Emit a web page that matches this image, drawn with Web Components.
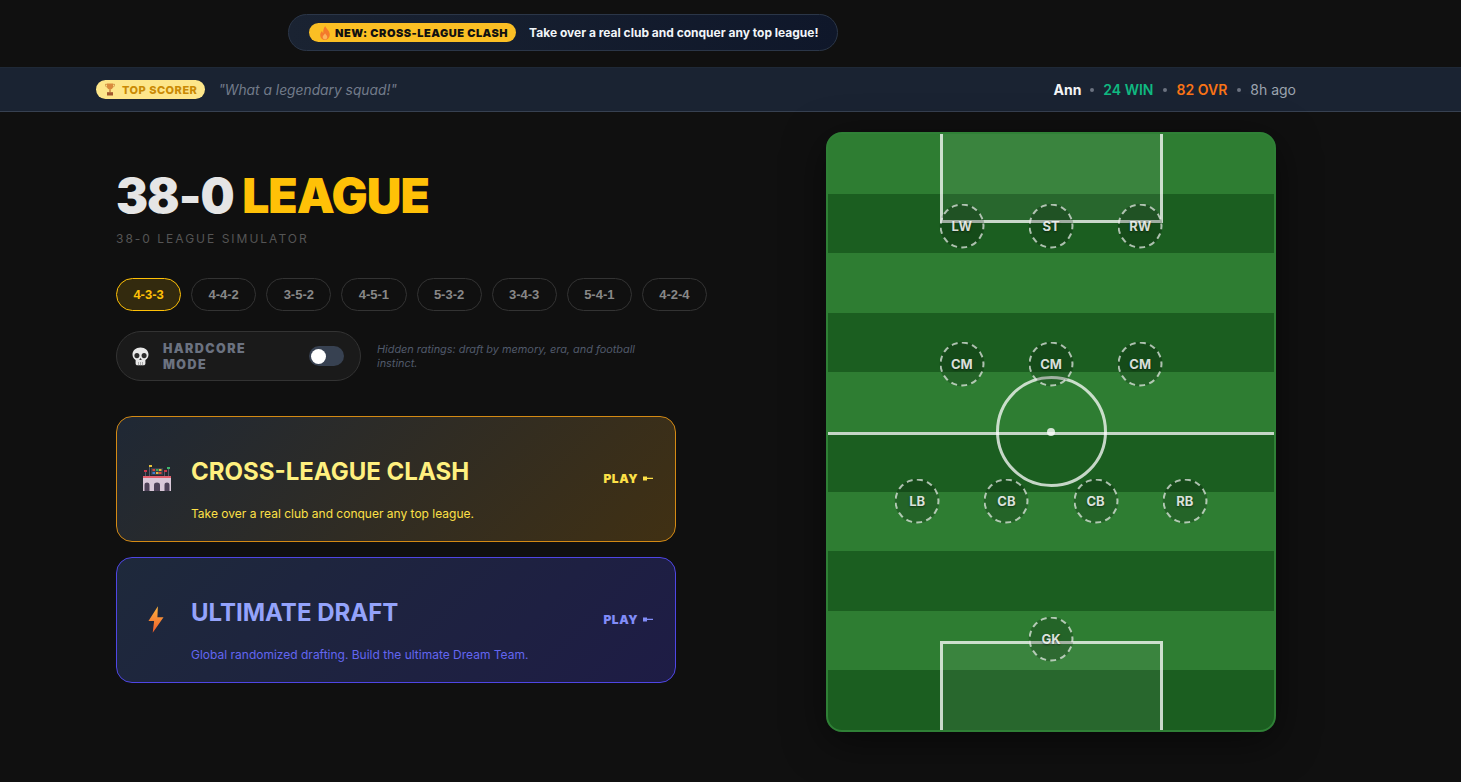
<!DOCTYPE html>
<html lang="en">
<head>
<meta charset="utf-8">
<title>38-0 League</title>
<style>
  html, body { margin: 0; height: 100%; background: #101010; overflow: hidden; }
  body { font-family: Inter, "Liberation Sans", sans-serif; color: #e5e5e5; }
  .main { display: flex; align-items: flex-start; padding: 20px 0 0 116px; }
</style>
</head>
<body>
<promo-banner></promo-banner>
<score-ticker></score-ticker>
<div class="main">
  <home-panel></home-panel>
  <pitch-board></pitch-board>
</div>

<script>
const ICONS = {
  fire: `<svg width="12" height="14" viewBox="0 0 12 14"><path d="M6.2 0C6.8 2.6 10.8 4.4 10.8 8.6C10.8 11.6 8.6 14 6 14C3.300 14 1.200 11.800 1.200 9C1.200 7.200 2.100 5.900 3 5C3.200 6 3.600 6.700 4.300 7C4 4.300 4.700 1.800 6.200 0Z" fill="#f4792b"/><path d="M6.100 7.200C6.500 8.600 8.300 9.300 8.300 11C8.300 12.500 7.300 13.500 6 13.500C4.700 13.500 3.700 12.500 3.700 11.100C3.700 9.500 5.400 8.900 6.100 7.200Z" fill="#fbb45c"/></svg>`,
  trophy: `<svg width="10" height="13" viewBox="0 0 10 13" style="margin-left:1px"><path d="M2 0.500H8V3.500C8 5.300 6.700 6.500 5 6.500C3.300 6.500 2 5.300 2 3.500Z" fill="#d98a3d"/><path d="M2 1.300H0.500C0.500 3 1 4 2.400 4.300M8 1.300H9.500C9.500 3 9 4 7.600 4.300" fill="none" stroke="#c9833a" stroke-width=".8"/><rect x="4.300" y="6.300" width="1.400" height="3" fill="#c77d3a"/><rect x="2" y="9.200" width="6" height="3.300" fill="#a1582c"/></svg>`,
  skull: `<svg width="17" height="19" viewBox="0 0 17 19"><path d="M8.500 0.500C3.800 0.500 0.500 3.400 0.500 7.600C0.500 10.200 1.700 12.100 3.600 13.100V16.400C3.600 17.500 4.400 18.300 5.500 18.300H11.500C12.600 18.300 13.400 17.500 13.400 16.400V13.100C15.300 12.100 16.500 10.200 16.500 7.600C16.500 3.400 13.200 0.500 8.500 0.500Z" fill="#e8e8e8"/><ellipse cx="4.900" cy="8.600" rx="2.500" ry="2.700" fill="#2c2c2c"/><ellipse cx="12.100" cy="8.600" rx="2.500" ry="2.700" fill="#2c2c2c"/><path d="M8.500 10.800L9.800 13H7.200Z" fill="#3c3c3c"/><path d="M6.500 15V18.200M8.500 15V18.200M10.500 15V18.200" stroke="#9a9a9a" stroke-width=".8"/></svg>`,
  stadium: `<svg width="28" height="26" viewBox="0 0 28 26">
    <rect x="8" y="3" width="12" height="7" fill="#39404e"/>
    <rect x="9.500" y="4" width="2.500" height="2" fill="#d9483b"/><rect x="13" y="4" width="2.500" height="2" fill="#3fa55b"/><rect x="16" y="4" width="2.500" height="2" fill="#e8b33a"/>
    <rect x="9.500" y="7" width="2.500" height="2" fill="#3f7fd0"/><rect x="13" y="7" width="2.500" height="2" fill="#e8b33a"/><rect x="16" y="7" width="2.500" height="2" fill="#d9483b"/>
    <path d="M2.500 5V11M6.500 1V11M21.500 5V11M25.500 3V11" stroke="#55586a" stroke-width="1"/>
    <rect x="1" y="5" width="3" height="2" fill="#c8384a"/><rect x="6" y="0" width="3" height="2" fill="#e8c23a"/><rect x="21" y="5" width="3" height="2" fill="#c8384a"/><rect x="24" y="2" width="3" height="2" fill="#3fb56b"/>
    <rect x="0" y="11" width="28" height="2" fill="#e2606e"/>
    <rect x="0" y="13" width="28" height="13" fill="#d9c9d9"/>
    <path d="M1.500 26V20C1.500 16.800 6.500 16.800 6.500 20V26ZM11 26V20C11 16.800 17 16.800 17 20V26ZM21.500 26V20C21.500 16.800 26.500 16.800 26.500 20V26Z" fill="#4e4258"/>
  </svg>`,
  bolt: `<svg width="16" height="27" viewBox="0 0 17 28" style="margin-right:2px"><defs><linearGradient id="b" x1="0" y1="0" x2="0" y2="1"><stop offset="0" stop-color="#fcb53f"/><stop offset="1" stop-color="#ef5a2b"/></linearGradient></defs><path d="M10.500 0L0.500 15.500H6.500L5 28L16.500 11.500H10Z" fill="url(#b)"/></svg>`,
};

class PromoBanner extends HTMLElement {
  constructor() {
    super();
    this.attachShadow({ mode: 'open' }).innerHTML = `
      <style>
        :host { display: flex; height: 67px; box-sizing: border-box; padding: 14px 0 0 288px; }
        .banner {
          display: flex; align-items: center; gap: 13px; width: 550px; height: 37px; box-sizing: border-box;
          padding: 0 20px; border: 1px solid #2b3648; border-radius: 19px;
          background: linear-gradient(90deg, #1a2332, #0f172a);
        }
        .badge {
          display: flex; align-items: center; gap: 4px; height: 19px; padding: 0 8px 0 10px; border-radius: 10px;
          background: #fbbf24; color: #111; font-size: 11px; font-weight: 900; letter-spacing: .5px; white-space: nowrap;
        }
        .msg { color: #f1f5f9; font-size: 12px; font-weight: 700; white-space: nowrap; }
      </style>
      <div class="banner">
        <span class="badge">${ICONS.fire}NEW: CROSS-LEAGUE CLASH</span>
        <span class="msg">Take over a real club and conquer any top league!</span>
      </div>`;
  }
}

class ScoreTicker extends HTMLElement {
  constructor() {
    super();
    this.attachShadow({ mode: 'open' }).innerHTML = `
      <style>
        :host {
          display: flex; align-items: center; justify-content: space-between; height: 45px; box-sizing: border-box;
          padding: 0 165px 0 96px; background: #1a2332; border-top: 1px solid #1f2937; border-bottom: 1px solid #374151;
        }
        .left, .right { display: flex; align-items: center; }
        .badge {
          display: flex; align-items: center; gap: 7px; height: 19px; padding: 0 8px; border-radius: 10px;
          background: #fde68a; color: #ca8a04; font-size: 11px; font-weight: 800; letter-spacing: .5px;
        }
        .quote { margin-left: 13px; color: #727b8a; font-size: 13.800px; font-style: italic; }
        .right { gap: 8px; font-size: 14px; }
        .name { margin-right: -1px; color: #f3f4f6; font-weight: 700; }
        .win { color: #10b981; font-weight: 600; }
        .ovr { color: #f97316; font-weight: 600; }
        .ago { color: #9ca3af; }
        .dot { width: 4px; height: 4px; margin: 0 1.500px; border-radius: 50%; background: #6b7280; }
      </style>
      <div class="left">
        <span class="badge">${ICONS.trophy}TOP SCORER</span>
        <span class="quote">"What a legendary squad!"</span>
      </div>
      <div class="right">
        <span class="name">Ann</span><i class="dot"></i>
        <span class="win">24 WIN</span><i class="dot"></i>
        <span class="ovr">82 OVR</span><i class="dot"></i>
        <span class="ago">8h ago</span>
      </div>`;
  }
}

class FormationPills extends HTMLElement {
  constructor() {
    super();
    const list = ['4-3-3', '4-4-2', '3-5-2', '4-5-1', '5-3-2', '3-4-3', '5-4-1', '4-2-4'];
    this.attachShadow({ mode: 'open' }).innerHTML = `
      <style>
        :host { display: flex; gap: 10px; }
        button {
          width: 65.140px; height: 33px; padding: 0; border: 1px solid #333; border-radius: 17px; background: transparent;
          color: #888; font: bold 13px "Liberation Sans", sans-serif;
        }
        button.active { border-color: #ffc107; background: rgba(255, 193, 7, .15); color: #ffc107; }
      </style>
      ${list.map((f, i) => `<button class="${i === 0 ? 'active' : ''}">${f}</button>`).join('')}`;
  }
}

class HardcoreToggle extends HTMLElement {
  constructor() {
    super();
    this.attachShadow({ mode: 'open' }).innerHTML = `
      <style>
        :host { display: flex; align-items: center; gap: 16px; }
        .box {
          display: flex; align-items: center; width: 245px; height: 50px; box-sizing: border-box; padding: 0 16px 0 15px;
          border: 1px solid #333; border-radius: 25px; background: #1a1a1a;
        }
        .label { width: 98px; margin: 2px 0 0 14px; color: #6b7280; font-size: 12.500px; line-height: 16px; font-weight: 900; letter-spacing: 1.400px; }
        .switch { display: flex; align-items: center; width: 35px; height: 20px; margin-left: auto; padding-left: 2px; box-sizing: border-box; border-radius: 10px; background: #374151; }
        .knob { width: 15px; height: 15px; border-radius: 50%; background: #fff; }
        .note { width: 280px; color: #505a6b; font-size: 10.900px; line-height: 14px; font-style: italic; }
      </style>
      <div class="box">
        ${ICONS.skull}
        <span class="label">HARDCORE MODE</span>
        <span class="switch"><i class="knob"></i></span>
      </div>
      <div class="note">Hidden ratings: draft by memory, era, and football instinct.</div>`;
  }
}

class ModeCard extends HTMLElement {
  constructor() {
    super();
    this.attachShadow({ mode: 'open' }).innerHTML = `
      <style>
        :host {
          display: flex; align-items: center; width: 560px; height: 126px; box-sizing: border-box; padding: 0 22px 0 25px;
          border: 1px solid var(--edge); border-radius: 16px; background: var(--fill);
        }
        .icon { display: flex; justify-content: center; width: 30px; margin: 2px 19px 0 0; }
        .text { flex: 1; margin-top: 19px; }
        .title { color: var(--title); font-size: 24px; line-height: 29px; font-weight: 700; }
        .sub { margin-top: 20px; color: var(--sub); font-size: 12px; line-height: 15px; }
        .play { display: flex; align-items: center; gap: 5px; margin-top: -2px; color: var(--play); font-size: 12px; font-weight: 900; letter-spacing: .5px; }
      </style>
      <span class="icon"><slot name="icon"></slot></span>
      <div class="text">
        <div class="title"><slot name="title"></slot></div>
        <div class="sub"><slot name="sub"></slot></div>
      </div>
      <span class="play">PLAY <svg width="10" height="5" viewBox="0 0 10 5"><path d="M0 0.500H4V1.800H10V3H4V4.500H0Z" fill="currentColor"/></svg></span>`;
  }
}

class HomePanel extends HTMLElement {
  constructor() {
    super();
    this.attachShadow({ mode: 'open' }).innerHTML = `
      <style>
        :host { display: block; width: 710px; padding-top: 37px; }
        h1 { margin: 0; color: #e5e5e5; font-size: 48px; line-height: 54px; font-weight: 900; letter-spacing: -1px; white-space: nowrap; }
        h1 b { color: #ffc107; font-weight: 900; }
        .tag { margin-top: 8px; color: #555; font-size: 12px; line-height: 15px; letter-spacing: 2px; }
        formation-pills { margin-top: 32px; }
        hardcore-toggle { margin-top: 20px; }
        .cards { display: flex; flex-direction: column; gap: 15px; margin-top: 35px; }
        .amber {
          --edge: #d48a14; --title: #fff07f; --sub: #fde047; --play: #fde047;
          --fill: linear-gradient(135deg, #1f2835, #403013);
        }
        .indigo {
          --edge: #4f46e5; --title: #94a3fb; --sub: #6366f1; --play: #818cf8;
          --fill: linear-gradient(135deg, #1e293b, #1e1c45);
        }
      </style>
      <h1>38-0 <b>LEAGUE</b></h1>
      <div class="tag">38-0 LEAGUE SIMULATOR</div>
      <formation-pills></formation-pills>
      <hardcore-toggle></hardcore-toggle>
      <div class="cards">
        <mode-card class="amber">
          <span slot="icon">${ICONS.stadium}</span>
          <span slot="title">CROSS-LEAGUE CLASH</span>
          <span slot="sub">Take over a real club and conquer any top league.</span>
        </mode-card>
        <mode-card class="indigo">
          <span slot="icon">${ICONS.bolt}</span>
          <span slot="title">ULTIMATE DRAFT</span>
          <span slot="sub">Global randomized drafting. Build the ultimate Dream Team.</span>
        </mode-card>
      </div>`;
  }
}

class PlayerSlot extends HTMLElement {
  constructor() {
    super();
    this.attachShadow({ mode: 'open' }).innerHTML = `
      <style>
        :host {
          position: absolute; display: flex; align-items: center; justify-content: center;
          width: 45px; height: 45px; box-sizing: border-box; padding-bottom: 1px; transform: translate(-50%, -50%);
          border: 2px dashed rgba(255, 255, 255, .65); border-radius: 50%; background: rgba(0, 0, 0, .2);
          color: rgba(255, 255, 255, .85); font-size: 13px; font-weight: 700; text-shadow: 0 1px 2px rgba(0, 0, 0, .5);
        }
      </style>
      <slot></slot>`;
  }
}

class PitchBoard extends HTMLElement {
  constructor() {
    super();
    const players = [
      ['LW', 30, 15.4], ['ST', 50, 15.4], ['RW', 70, 15.4],
      ['CM', 30, 38.6], ['CM', 50, 38.6], ['CM', 70, 38.6],
      ['LB', 20, 61.5], ['CB', 40, 61.5], ['CB', 60, 61.5], ['RB', 80, 61.5],
      ['GK', 50, 84.7],
    ];
    this.attachShadow({ mode: 'open' }).innerHTML = `
      <style>
        :host {
          position: relative; display: block; flex: none; width: 450px; height: 600px; box-sizing: border-box; overflow: hidden;
          border: 2px solid #2f8036; border-radius: 16px;
          background: repeating-linear-gradient(180deg, #2e7d32 0, #2e7d32 10%, #1b5e20 10%, #1b5e20 20%);
          box-shadow: 0 10px 40px rgba(0, 0, 0, .5);
        }
        .line { position: absolute; box-sizing: border-box; }
        .mid { left: 0; right: 0; top: 298px; height: 3px; background: rgba(255, 255, 255, .75); }
        .circle { left: 168px; top: 242px; width: 111px; height: 111px; border: 3px solid rgba(255, 255, 255, .75); border-radius: 50%; }
        .spot { left: 219px; top: 294px; width: 8px; height: 8px; border-radius: 50%; background: rgba(255, 255, 255, .8); }
        .box { left: 112px; width: 223px; height: 89px; border: 3px solid rgba(255, 255, 255, .75); background: rgba(255, 255, 255, .06); }
        .top { top: 0; border-top: 0; }
        .bottom { bottom: 0; border-bottom: 0; }
      </style>
      <div class="line mid"></div>
      <div class="line circle"></div>
      <div class="line spot"></div>
      <div class="line box top"></div>
      <div class="line box bottom"></div>
      ${players.map(([p, x, y]) => `<player-slot style="left:${x}%;top:${y}%">${p}</player-slot>`).join('')}`;
  }
}

customElements.define('promo-banner', PromoBanner);
customElements.define('score-ticker', ScoreTicker);
customElements.define('formation-pills', FormationPills);
customElements.define('hardcore-toggle', HardcoreToggle);
customElements.define('mode-card', ModeCard);
customElements.define('home-panel', HomePanel);
customElements.define('player-slot', PlayerSlot);
customElements.define('pitch-board', PitchBoard);
</script>
</body>
</html>
